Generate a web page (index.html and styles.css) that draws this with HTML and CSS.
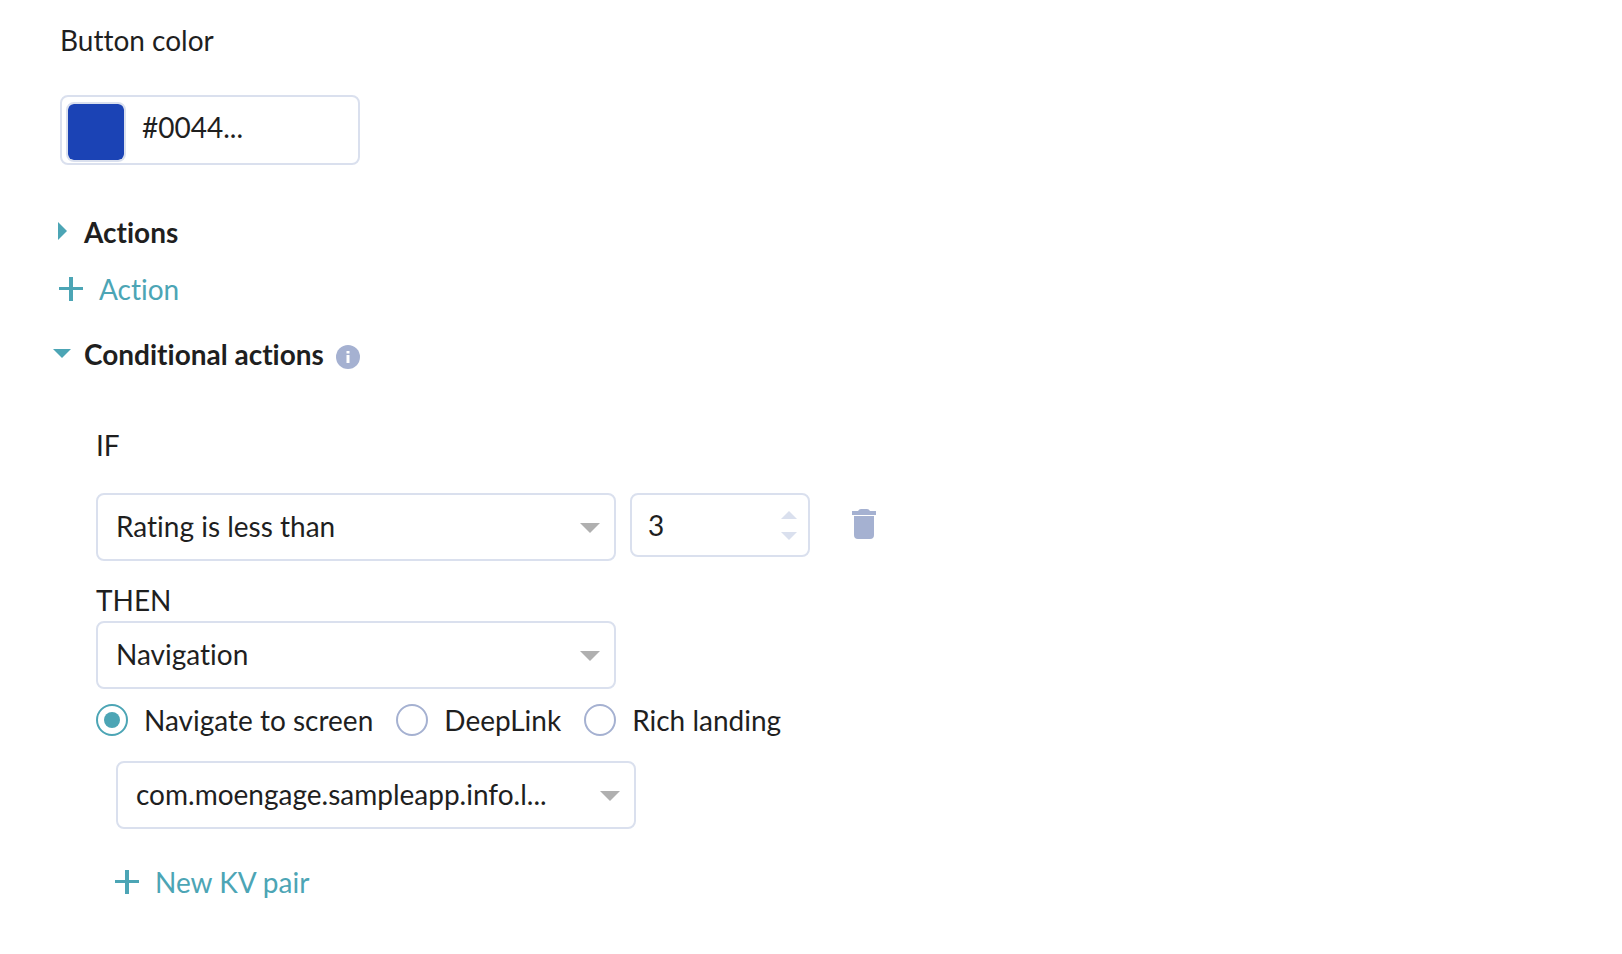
FILE: index.html
```html
<!DOCTYPE html>
<html lang="en">
<head>
  <meta charset="UTF-8">
  <meta name="viewport" content="width=device-width, initial-scale=1.0">
  <title>Button actions</title>
  <link rel="stylesheet" href="styles.css">
</head>
<body>
  <form class="panel">
    <label class="field-label" for="color-value">Button color</label>
    <div class="color-field">
      <input type="color" class="swatch" value="#1b43b5" aria-label="Pick button color">
      <input type="text" class="color-value" id="color-value" value="#0044...">
    </div>

    <button type="button" class="section-title actions-title" aria-expanded="false">
      <svg class="caret" width="20" height="20" viewBox="0 0 20 20"><path d="M6 0l9 9-9 9z"/></svg>
      <span>Actions</span>
    </button>
    <button type="button" class="add-link add-action">
      <svg width="24" height="24" viewBox="0 0 24 24"><path d="M10 0h4v10h10v3H14v11h-4V13H0v-3h10z"/></svg>
      <span>Action</span>
    </button>

    <div class="section-head">
      <button type="button" class="section-title" aria-expanded="true">
        <svg class="caret" width="20" height="20" viewBox="0 0 20 20"><path d="M1 5h18l-9 9z"/></svg>
        <span>Conditional actions</span>
      </button>
      <svg class="info" width="24" height="24" viewBox="0 0 24 24">
        <circle cx="12" cy="12" r="12" fill="#a5b1d1"/>
        <path d="M10.5 6h3v2.500h-3zM10.5 10h3v8h-3z" fill="#fff"/>
      </svg>
    </div>

    <div class="condition">
      <label class="if-label" for="rule">IF</label>
      <div class="rule-row">
        <div class="select-box">
          <select id="rule">
            <option>Rating is less than</option>
            <option>Rating is greater than</option>
          </select>
          <svg class="arrow" width="20" height="10" viewBox="0 0 20 10"><path d="M0 0h20L10 10z"/></svg>
        </div>
        <div class="number-box">
          <input type="number" value="3" min="1" max="5" aria-label="Rating">
          <div class="steps">
            <button type="button" aria-label="Increase"><svg width="16" height="8" viewBox="0 0 16 8"><path d="M0 8h16L8 0z"/></svg></button>
            <button type="button" aria-label="Decrease"><svg width="16" height="8" viewBox="0 0 16 8"><path d="M0 0h16L8 8z"/></svg></button>
          </div>
        </div>
        <button type="button" class="delete" aria-label="Delete condition">
          <svg width="24" height="30" viewBox="0 0 24 30">
            <path d="M0 2h6q1-2 3-2h6q2 0 3 2h6v4H0zM2 7h20v19q0 4-4 4H6q-4 0-4-4z"/>
          </svg>
        </button>
      </div>

      <label class="then-label" for="action">THEN</label>
      <div class="select-box">
        <select id="action">
          <option>Navigation</option>
        </select>
        <svg class="arrow" width="20" height="10" viewBox="0 0 20 10"><path d="M0 0h20L10 10z"/></svg>
      </div>

      <div class="radios">
        <label><input type="radio" name="target" checked>Navigate to screen</label>
        <label><input type="radio" name="target">DeepLink</label>
        <label><input type="radio" name="target">Rich landing</label>
      </div>

      <div class="screen">
        <div class="select-box">
          <select aria-label="Screen name">
            <option>com.moengage.sampleapp.info.l...</option>
          </select>
          <svg class="arrow" width="20" height="10" viewBox="0 0 20 10"><path d="M0 0h20L10 10z"/></svg>
        </div>
        <button type="button" class="add-link add-pair">
          <svg width="24" height="24" viewBox="0 0 24 24"><path d="M10 0h4v10h10v3H14v11h-4V13H0v-3h10z"/></svg>
          <span>New KV pair</span>
        </button>
      </div>
    </div>
  </form>
</body>
</html>
```
FILE: styles.css
```css
* {
  box-sizing: border-box;
}
body {
  margin: 0;
  background-color: #fff;
  color: #1f1f1f;
  font-family: Lato, "Liberation Sans", sans-serif;
  font-size: 28px;
  line-height: 36px;
  font-variant-ligatures: none;
}
input, select, button {
  font: inherit;
  font-variant-ligatures: none;
  color: inherit;
  margin: 0;
  padding: 0;
  border: none;
  background: none;
}
button {
  cursor: pointer;
}
svg {
  display: block;
  flex: none;
}
.panel {
  display: flex;
  flex-direction: column;
  align-items: flex-start;
  padding: 22px 60px 40px;
}

/* color picker */
.color-field {
  display: flex;
  align-items: flex-start;
  width: 300px;
  height: 70px;
  margin-top: 37px;
  padding: 5px 4px;
  border: 2px solid #dae0ee;
  border-radius: 8px;
}
.swatch {
  width: 60px;
  height: 60px;
  flex: none;
  border: 2px solid #dae0ee;
  border-radius: 8px;
  overflow: hidden;
  appearance: none;
}
.swatch::-webkit-color-swatch-wrapper {
  padding: 0;
}
.swatch::-webkit-color-swatch {
  border: none;
  border-radius: 5px;
}
.color-value {
  flex: 1;
  min-width: 0;
  height: 50px;
  padding-left: 16px;
}

/* section headings */
.section-title {
  display: flex;
  align-items: center;
  gap: 12px;
  margin-left: -8px;
  font-weight: bold;
}
.caret {
  fill: #4ca5b5;
}
.actions-title {
  margin-top: 49px;
}
.section-head {
  display: flex;
  align-items: flex-end;
  gap: 12px;
  margin-top: 29px;
}
.info {
  margin-bottom: 3px;
}
.add-link {
  display: flex;
  align-items: center;
  gap: 16px;
  margin-left: -1px;
  color: #4ca5b5;
  fill: #4ca5b5;
}
.add-action {
  margin-top: 21px;
}

/* condition block */
.condition {
  display: flex;
  flex-direction: column;
  align-items: flex-start;
  margin-top: 55px;
  padding-left: 36px;
}
.rule-row {
  display: flex;
  align-items: flex-start;
  margin-top: 30px;
}
.select-box {
  display: grid;
  align-items: center;
  width: 520px;
  height: 68px;
}
.select-box select,
.select-box .arrow {
  grid-area: 1 / 1;
}
.select-box select {
  width: 100%;
  height: 100%;
  padding: 0 50px 2px 18px;
  border: 2px solid #dae0ee;
  border-radius: 8px;
  appearance: none;
}
.arrow {
  justify-self: end;
  margin: 2px 16px 0 0;
  fill: #b0b0b0;
  pointer-events: none;
}
.number-box {
  display: flex;
  align-items: center;
  width: 180px;
  height: 64px;
  margin-left: 14px;
  padding: 0 11px 0 16px;
  border: 2px solid #dae0ee;
  border-radius: 8px;
}
.number-box input {
  flex: 1;
  min-width: 0;
  appearance: textfield;
}
.number-box input::-webkit-inner-spin-button {
  appearance: none;
}
.steps {
  display: flex;
  flex-direction: column;
  gap: 13px;
  fill: #dae0ee;
}
.delete {
  margin: 16px 0 0 42px;
  fill: #a5b1d1;
}
.then-label {
  margin: 21px 0 3px;
}
.radios {
  display: flex;
  flex-wrap: wrap;
  gap: 23px;
  margin-top: 13px;
}
.radios label {
  display: flex;
  align-items: center;
  gap: 16px;
}
.radios input {
  width: 32px;
  height: 32px;
  flex: none;
  border: 2px solid #a5b1d1;
  border-radius: 50%;
  appearance: none;
}
.radios input:checked {
  padding: 6px;
  border-color: #4ca5b5;
  background: #4ca5b5 content-box;
}
.screen {
  margin-top: 23px;
  padding-left: 20px;
}
.add-pair {
  margin-top: 35px;
}
```
